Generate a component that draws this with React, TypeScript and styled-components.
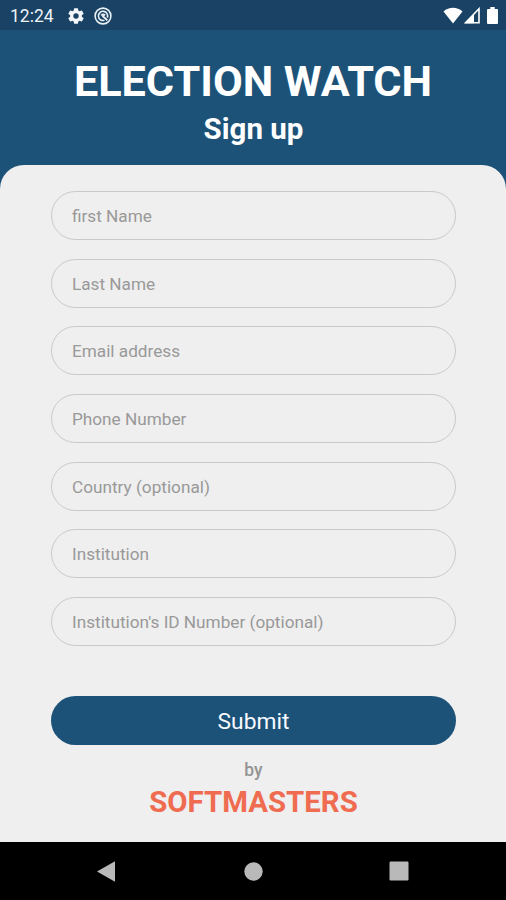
import React from "react";
import styled, { createGlobalStyle } from "styled-components";

const GlobalStyle = createGlobalStyle`
  * { box-sizing: border-box; }
  html, body { margin: 0; padding: 0; background: #1d5278; }
  body { font-family: Roboto, "Noto Sans", sans-serif; overflow: hidden; }
`;

const Screen = styled.div`
  display: flex;
  flex-direction: column;
  width: 100%;
  height: 900px;
  background: #1d5278;
`;

const StatusBar = styled.div`
  display: flex;
  align-items: center;
  justify-content: space-between;
  height: 30px;
  flex: none;
  padding: 1px 8px 0 10px;
  background: #194264;
`;

const StatusGroup = styled.div<{ $gap: number }>`
  display: flex;
  align-items: center;
  gap: ${({ $gap }) => $gap}px;

  svg { display: block; }
`;

const Clock = styled.span`
  width: 45px;
  margin-right: 3px;
  color: #eef3f8;
  font-size: 17.5px;
  line-height: 20px;
  white-space: nowrap;
`;

const Header = styled.header`
  display: flex;
  flex-direction: column;
  align-items: center;
  height: 135px;
  flex: none;
  padding-top: 27px;
  color: #ffffff;
  white-space: nowrap;
`;

const Title = styled.h1`
  margin: 0;
  font-size: 43.2px;
  font-weight: 700;
  line-height: 50px;
`;

const Subtitle = styled.h2`
  margin: 5px 0 0;
  padding-left: 1px;
  font-size: 29.5px;
  font-weight: 700;
  line-height: 34px;
`;

const Panel = styled.main`
  display: flex;
  flex-direction: column;
  flex: 1;
  padding: 25.9px 50px 0 51px;
  background: #efefef;
  border-radius: 24px 24px 0 0;
`;

const Form = styled.form`
  display: flex;
  flex-direction: column;
  gap: 18.7px;
`;

const Field = styled.input`
  width: 100%;
  height: 49px;
  padding: 1px 20px 0;
  border: 1.4px solid #c9c9c9;
  border-radius: 25px;
  outline: none;
  background: transparent;
  color: #555555;
  font-family: inherit;
  font-size: 17.2px;

  &::placeholder { color: #999999; opacity: 1; }
`;

const SubmitButton = styled.button`
  width: 100%;
  height: 49px;
  margin-top: 31.2px;
  padding: 2px 0 0;
  border: 0;
  border-radius: 25px;
  background: #1d5278;
  color: #f7faff;
  font-family: inherit;
  font-size: 22.8px;
`;

const Credit = styled.footer`
  display: flex;
  flex-direction: column;
  align-items: center;
  margin-top: 15px;
`;

const By = styled.span`
  color: #949494;
  font-size: 17.5px;
  font-weight: 500;
  line-height: 20px;
`;

const Company = styled.strong`
  margin-top: 5px;
  color: #ef6c50;
  font-size: 29.4px;
  font-weight: 700;
  line-height: 34px;
`;

const NavBar = styled.nav`
  display: grid;
  grid-template-columns: 180px 1fr 180px;
  align-items: center;
  height: 58px;
  flex: none;
  background: #000000;
`;

const NavItem = styled.div<{ $pad?: string }>`
  display: flex;
  justify-content: center;
  padding: ${({ $pad }) => $pad ?? "0"};
`;

const BatterySlot = styled.div`
  margin-left: 6px;
`;

const fields = [
  "first Name",
  "Last Name",
  "Email address",
  "Phone Number",
  "Country (optional)",
  "Institution",
  "Institution's ID Number (optional)",
];

const GearIcon = () => (
  <svg width="18" height="18" viewBox="1 1 22 22" fill="#f2f6fa">
    <path d="M19.14 12.94c.04-.3.06-.61.06-.94s-.02-.64-.07-.94l2.03-1.58a.49.49 0 0 0 .12-.61l-1.92-3.32a.49.49 0 0 0-.59-.22l-2.39.96a7 7 0 0 0-1.62-.94l-.36-2.54a.48.48 0 0 0-.48-.41h-3.84a.47.47 0 0 0-.47.41l-.36 2.54c-.59.24-1.13.57-1.62.94l-2.39-.96a.47.47 0 0 0-.59.22L2.74 8.87a.48.48 0 0 0 .12.61l2.03 1.58a6 6 0 0 0-.02 1.88l-2.03 1.58a.49.49 0 0 0-.12.61l1.92 3.32c.12.22.37.29.59.22l2.39-.96c.5.38 1.03.7 1.62.94l.36 2.54c.05.24.24.41.48.41h3.84c.24 0 .44-.17.47-.41l.36-2.54c.59-.24 1.13-.56 1.62-.94l2.39.96c.22.08.47 0 .59-.22l1.92-3.32a.47.47 0 0 0-.12-.61zM12 15.3A3.3 3.3 0 1 1 12 8.7a3.3 3.3 0 0 1 0 6.6z" />
  </svg>
);

const DebugIcon = () => (
  <svg width="18" height="18" viewBox="0 0 18 18" fill="none" stroke="#e8eff5">
    <circle cx="9" cy="9" r="7.9" strokeWidth="1.6" />
    <path d="M10.4 13.3A4.6 4.6 0 1 1 13.3 10.6" strokeWidth="1.6" />
    <path d="M7.2 8.4Q9.2 6.6 11 8.5M8.4 8.9l4.9 4.4" strokeWidth="1.9" />
  </svg>
);

const WifiIcon = () => (
  <svg width="20" height="17" viewBox="0 0 20 17" fill="#ffffff">
    <path d="M.5 4.4C5.8-.3 14.2-.3 19.5 4.4L10 16.5z" />
  </svg>
);

const SignalIcon = () => (
  <svg width="16" height="17" viewBox="0 0 16 17">
    <path d="M1.5 15.8 15 1.8v14z" fill="none" stroke="#ffffff" strokeWidth="1.6" />
    <path d="M1 16.2 10 7.2v9z" fill="#ffffff" />
  </svg>
);

const BatteryIcon = () => (
  <svg width="11" height="17" viewBox="0 0 11 17" fill="#ffffff">
    <path d="M3.3 0h4.4v2H10q1 0 1 1v13q0 1-1 1H1q-1 0-1-1V3q0-1 1-1h2.3z" />
  </svg>
);

export default function App() {
  return (
    <Screen>
      <GlobalStyle />
      <StatusBar>
        <StatusGroup $gap={9}>
          <Clock>12:24</Clock>
          <GearIcon />
          <DebugIcon />
        </StatusGroup>
        <StatusGroup $gap={1}>
          <WifiIcon />
          <SignalIcon />
          <BatterySlot><BatteryIcon /></BatterySlot>
        </StatusGroup>
      </StatusBar>
      <Header>
        <Title>ELECTION WATCH</Title>
        <Subtitle>Sign up</Subtitle>
      </Header>
      <Panel>
        <Form onSubmit={(event) => event.preventDefault()}>
          {fields.map((label) => (
            <Field key={label} placeholder={label} aria-label={label} />
          ))}
          <SubmitButton type="submit">Submit</SubmitButton>
        </Form>
        <Credit>
          <By>by</By>
          <Company>SOFTMASTERS</Company>
        </Credit>
      </Panel>
      <NavBar>
        <NavItem $pad="0 0 0 31px">
          <svg width="18" height="21" viewBox="0 0 18 21" fill="#b9b9b9"><path d="M0 10.5 18 .3v20.4z" /></svg>
        </NavItem>
        <NavItem $pad="0 0 0 1px">
          <svg width="19" height="19" viewBox="0 0 19 19" fill="#b9b9b9"><circle cx="9.5" cy="9.5" r="9.2" /></svg>
        </NavItem>
        <NavItem $pad="0 34px 0 0">
          <svg width="20" height="20" viewBox="0 0 20 20" fill="#b9b9b9"><rect x=".5" y=".5" width="19" height="19" rx="1.2" /></svg>
        </NavItem>
      </NavBar>
    </Screen>
  );
}
